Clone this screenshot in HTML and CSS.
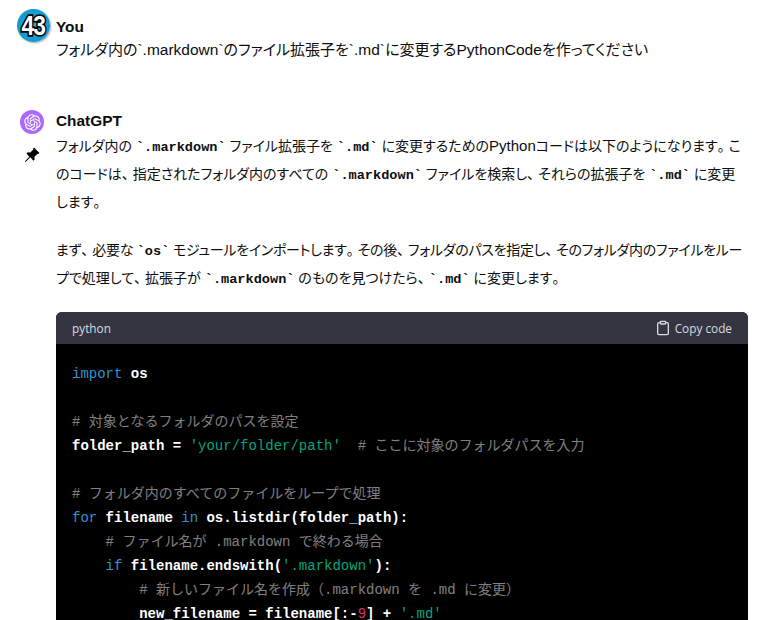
FILE: index.html
```html
<!DOCTYPE html>
<html lang="ja">
<head>
<meta charset="utf-8">
<title>ChatGPT</title>
<link rel="stylesheet" href="styles.css">
</head>
<body>
<main class="thread">
  <section class="msg msg-user">
    <div class="side">
      <div class="avatar-43"><span>43</span></div>
    </div>
    <div class="content">
      <div class="name">You</div>
      <p class="user-text">フォルダ内の<span class="lat">`.markdown`</span>のファイル拡張子を<span class="lat">`.md`</span>に変更する<span class="lat">PythonCode</span>を作ってください</p>
    </div>
  </section>
  <section class="msg msg-gpt">
    <div class="side side-gpt">
      <div class="avatar-gpt">
        <svg viewBox="0 0 41 41" width="17" height="17"><path fill="#fff" d="M37.5324 16.8707C37.9808 15.5241 38.1363 14.0974 37.9886 12.6859C37.8409 11.2744 37.3934 9.91076 36.676 8.68622C35.6126 6.83404 33.9882 5.3676 32.0373 4.4985C30.0864 3.62941 27.9098 3.40259 25.8215 3.85078C24.8796 2.7893 23.7219 1.94125 22.4257 1.36341C21.1295 0.785575 19.7249 0.491269 18.3058 0.500197C16.1708 0.495044 14.0893 1.16803 12.3614 2.42214C10.6335 3.67624 9.34853 5.44666 8.6917 7.47815C7.30085 7.76286 5.98686 8.3414 4.8377 9.17505C3.68854 10.0087 2.73073 11.0782 2.02839 12.312C0.956464 14.1591 0.498905 16.2988 0.721698 18.4228C0.944492 20.5467 1.83612 22.5449 3.268 24.1293C2.81966 25.4759 2.66413 26.9026 2.81182 28.3141C2.95951 29.7256 3.40701 31.0892 4.12437 32.3138C5.18791 34.1659 6.8123 35.6322 8.76321 36.5013C10.7141 37.3704 12.8907 37.5973 14.9789 37.1492C15.9208 38.2107 17.0786 39.0587 18.3747 39.6366C19.6709 40.2144 21.0755 40.5087 22.4946 40.4998C24.6307 40.5054 26.7133 39.8321 28.4418 38.5772C30.1704 37.3223 31.4556 35.5506 32.1119 33.5179C33.5027 33.2332 34.8167 32.6547 35.9659 31.821C37.115 30.9874 38.0728 29.9178 38.7752 28.684C39.8458 26.8371 40.3023 24.6979 40.0789 22.5748C39.8556 20.4517 38.9639 18.4544 37.5324 16.8707ZM22.4978 37.8849C20.7443 37.8874 19.0459 37.2733 17.6994 36.1501C17.7601 36.117 17.8666 36.0586 17.936 36.0161L25.9004 31.4156C26.1003 31.3019 26.2663 31.137 26.3813 30.9378C26.4964 30.7386 26.5563 30.5124 26.5549 30.2825V19.0542L29.9213 20.998C29.9389 21.0068 29.9541 21.0198 29.9656 21.0359C29.977 21.052 29.9842 21.0707 29.9867 21.0902V30.3889C29.9842 32.375 29.1946 34.2791 27.7909 35.6841C26.3872 37.0892 24.4838 37.8806 22.4978 37.8849ZM6.39227 31.0064C5.51397 29.4888 5.19742 27.7107 5.49804 25.9832C5.55718 26.0187 5.66048 26.0818 5.73461 26.1244L13.699 30.7248C13.8975 30.8408 14.1233 30.902 14.3532 30.902C14.583 30.902 14.8088 30.8408 15.0073 30.7248L24.731 25.1103V28.9979C24.7321 29.0177 24.7283 29.0376 24.7199 29.0556C24.7115 29.0736 24.6988 29.0893 24.6829 29.1012L16.6317 33.7497C14.9096 34.7416 12.8643 35.0097 10.9447 34.4954C9.02506 33.9811 7.38785 32.7263 6.39227 31.0064ZM4.29707 13.6194C5.17156 12.0998 6.55279 10.9364 8.19885 10.3327C8.19885 10.4013 8.19491 10.5228 8.19491 10.6071V19.808C8.19351 20.0378 8.25334 20.2638 8.36823 20.4629C8.48312 20.6619 8.64893 20.8267 8.84863 20.9404L18.5723 26.5542L15.206 28.4979C15.1894 28.5089 15.1703 28.5155 15.1505 28.5173C15.1307 28.5191 15.1107 28.516 15.0924 28.5082L7.04046 23.8557C5.32135 22.8601 4.06716 21.2235 3.55289 19.3046C3.03862 17.3858 3.30624 15.3413 4.29707 13.6194ZM31.955 20.0556L22.2312 14.4411L25.5976 12.4981C25.6142 12.4872 25.6333 12.4805 25.6531 12.4787C25.6729 12.4769 25.6928 12.4801 25.7111 12.4879L33.7631 17.1364C34.9967 17.849 36.0017 18.8982 36.6606 20.1613C37.3194 21.4244 37.6047 22.849 37.4832 24.2684C37.3617 25.6878 36.8382 27.0432 35.9743 28.1759C35.1103 29.3086 33.9415 30.1717 32.6047 30.6641C32.6047 30.5947 32.6047 30.4733 32.6047 30.3889V21.188C32.6066 20.9586 32.5474 20.7328 32.4332 20.5338C32.319 20.3348 32.154 20.1698 31.955 20.0556ZM35.3055 15.0128C35.2464 14.9765 35.1431 14.9142 35.069 14.8717L27.1045 10.2712C26.906 10.1554 26.6803 10.0943 26.4504 10.0943C26.2206 10.0943 25.9948 10.1554 25.7963 10.2712L16.0726 15.8858V11.9982C16.0715 11.9783 16.0753 11.9585 16.0837 11.9405C16.0921 11.9225 16.1048 11.9068 16.1207 11.8949L24.1719 7.25025C25.4053 6.53903 26.8158 6.19376 28.2383 6.25482C29.6608 6.31589 31.0364 6.78077 32.2044 7.59508C33.3723 8.40939 34.2842 9.53945 34.8334 10.8531C35.3826 12.1667 35.5464 13.6095 35.3055 15.0128ZM14.2424 21.9419L10.8752 19.9981C10.8576 19.9893 10.8423 19.9763 10.8309 19.9602C10.8195 19.9441 10.8122 19.9254 10.8098 19.9058V10.6071C10.8107 9.18295 11.2173 7.78848 11.9819 6.58696C12.7466 5.38544 13.8377 4.42659 15.1275 3.82264C16.4173 3.21869 17.8524 2.99464 19.2649 3.1767C20.6775 3.35876 22.0089 3.93941 23.1034 4.85067C23.0427 4.88379 22.937 4.94215 22.8668 4.98473L14.9024 9.58517C14.7025 9.69878 14.5366 9.86356 14.4215 10.0626C14.3065 10.2616 14.2466 10.4877 14.2479 10.7175L14.2424 21.9419ZM16.071 17.9991L20.4018 15.4978L24.7325 17.9975V22.9985L20.4018 25.4983L16.071 22.9985V17.9991Z"/></svg>
      </div>
      <svg class="pin" viewBox="0 0 16 16" width="18" height="18"><path fill="#000" d="M9.8 1.4l4.8 4.8-.9.9-.8-.2-2.7 2.7.1 2.4-1 1-2.9-2.9L2.6 14l-.9.3.3-.9 3.6-3.9L3.1 6.6l1-1 2.4.1 2.7-2.7-.2-.8z"/></svg>
    </div>
    <div class="content">
      <div class="name">ChatGPT</div>
      <p>フォルダ内の <code>`.markdown`</code> ファイル拡張子を <code>`.md`</code> に変更するための<span class="lat">Python</span>コードは以下のようになります<span class="punct">。</span>こ<br>のコードは<span class="punct">、</span>指定されたフォルダ内のすべての <code>`.markdown`</code> ファイルを検索し<span class="punct">、</span>それらの拡張子を <code>`.md`</code> に変更<br>します<span class="punct">。</span></p>
      <p class="para"><span class="tight">まず<span class="punct">、</span>必要な <code>`os`</code> モジュールをインポートします<span class="punct">。</span>その後<span class="punct">、</span>フォルダのパスを指定し<span class="punct">、</span>そのフォルダ内のファイルをルー</span><br>プで処理して<span class="punct">、</span>拡張子が <code>`.markdown`</code> のものを見つけたら<span class="punct">、</span><code>`.md`</code> に変更します<span class="punct">。</span></p>
      <div class="codeblock">
        <div class="code-head">
          <span>python</span>
          <span class="copy">
            <svg viewBox="0 0 24 24" width="16" height="16" fill="none" stroke="currentColor" stroke-width="2" stroke-linecap="round" stroke-linejoin="round"><path d="M16 4h2a2 2 0 0 1 2 2v14a2 2 0 0 1-2 2H6a2 2 0 0 1-2-2V6a2 2 0 0 1 2-2h2"/><rect x="8" y="2" width="8" height="4" rx="1"/></svg>
            Copy code
          </span>
        </div>
<pre class="code"><span class="kw">import</span> os

<span class="cm"># 対象となるフォルダのパスを設定</span>
folder_path = <span class="str">'your/folder/path'</span>  <span class="cm"># ここに対象のフォルダパスを入力</span>

<span class="cm"># フォルダ内のすべてのファイルをループで処理</span>
<span class="kw">for</span> filename <span class="kw">in</span> os.listdir(folder_path):
    <span class="cm"># ファイル名が .markdown で終わる場合</span>
    <span class="kw">if</span> filename.endswith(<span class="str">'.markdown'</span>):
        <span class="cm"># 新しいファイル名を作成（.markdown を .md に変更）</span>
        new_filename = filename[:-<span class="num">9</span>] + <span class="str">'.md'</span></pre>
      </div>
    </div>
  </section>
</main>
</body>
</html>
```
FILE: styles.css
```css
html, body {
  margin: 0;
  height: 620px;
  overflow: hidden;
  background: #fff;
}
.thread {
  font-family: "Liberation Sans", "Noto Sans CJK JP", sans-serif;
  font-size: 14px;
  line-height: 28px;
  color: #0d0d0d;
  font-feature-settings: "palt";
  padding-top: 9px;
}
.msg {
  display: flex;
  padding-right: 20px;
}
.msg-gpt {
  margin-top: 46px;
}
.side {
  width: 56px;
  flex: none;
  padding-left: 17px;
  box-sizing: border-box;
}
.side-gpt {
  padding-left: 20px;
}
.avatar-43 {
  width: 33px;
  height: 33px;
  border-radius: 50%;
  background: radial-gradient(circle at 50% 50%, #1fa9e0 0, #0b94cd 100%);
  box-shadow: 1px 1px 2px rgba(0, 0, 0, .35);
  display: flex;
  align-items: center;
  justify-content: center;
}
.avatar-43 span {
  display: inline-block;
  font-family: "Liberation Sans", sans-serif;
  font-weight: 700;
  font-size: 24px;
  line-height: 33px;
  letter-spacing: -1px;
  color: #fff;
  -webkit-text-stroke: 3px #000;
  paint-order: stroke fill;
  transform: scale(.95, 1.12);
}
.avatar-gpt {
  width: 24px;
  height: 24px;
  border-radius: 50%;
  background: #ab68ff;
  display: flex;
  align-items: center;
  justify-content: center;
}
.pin {
  display: block;
  margin: 12px 0 0 3px;
}
.content {
  flex: 1;
  min-width: 0;
  white-space: nowrap;
}
.name {
  font-weight: 700;
  font-size: 15.4px;
  line-height: 24px;
  padding-top: 6px;
}
.msg-gpt .name {
  padding-top: 0;
  line-height: 23px;
  margin-top: -1px;
}
p {
  margin: 0;
}
.user-text {
  margin-top: -3px;
  font-size: 15px;
}
.user-text .lat {
  font-size: 15.5px;
}
.para {
  margin-top: 20px;
}
.lat {
  font-size: 15px;
  line-height: 1;
}
.punct {
  font-feature-settings: normal;
  letter-spacing: -3px;
}
.tight {
  letter-spacing: -.3px;
}
code {
  font-family: "Liberation Mono", "Noto Sans CJK JP", monospace;
  font-size: 13.6px;
  line-height: 1;
  font-weight: 700;
  letter-spacing: 0;
}
.codeblock {
  margin-top: 20px;
  border-radius: 6px 6px 0 0;
  overflow: hidden;
  background: #000;
}
.code-head {
  height: 32px;
  background: #343541;
  color: #d9d9e3;
  font-family: "Open Sans", sans-serif;
  display: flex;
  align-items: center;
  justify-content: space-between;
  padding: 0 16px;
  font-size: 11.8px;
  line-height: 16px;
}
.copy {
  display: flex;
  align-items: center;
  gap: 4px;
}
.code {
  margin: 0;
  padding: 18px 16px 0 16px;
  font-family: "Liberation Mono", "Noto Sans CJK JP", monospace;
  font-size: 14px;
  line-height: 24px;
  font-weight: 700;
  font-feature-settings: normal;
  color: #fff;
}
.kw, .str, .cm, .num { font-weight: 400; }
.kw { color: #2e95d3; }
.str { color: #00a67d; }
.cm { color: rgba(255, 255, 255, .5); }
.num { color: #df3079; }
```
